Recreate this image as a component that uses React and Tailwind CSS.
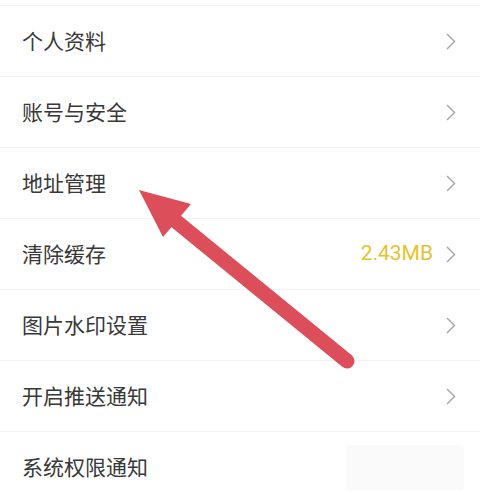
import React from "react";

const items = [
  { label: "个人资料" },
  { label: "账号与安全" },
  { label: "地址管理" },
  { label: "清除缓存", value: "2.43MB" },
  { label: "图片水印设置" },
  { label: "开启推送通知" },
  { label: "系统权限通知", hidden: true },
];

function Chevron() {
  return (
    <svg width="10" height="17" viewBox="0 0 10 17" fill="none">
      <path d="M1 1 L8.5 8.5 L1 16" stroke="#a3a3a3" strokeWidth="1.4" />
    </svg>
  );
}

export default function App() {
  return (
    <div
      className="relative w-[480px] h-[491px] overflow-hidden bg-white pt-[5px]"
      style={{ fontFamily: '"Noto Sans CJK SC", "Noto Sans", sans-serif' }}
    >
      {items.map((item) => (
        <div
          key={item.label}
          className="flex items-center h-[71px] border-t border-[#f2f2f2] pl-[22px] pr-[24px]"
        >
          <span className="flex-1 text-[21px] text-[#383838]">{item.label}</span>
          {item.value && (
            <span
              className="mr-[13px] text-[21px] text-[#e5c230]"
              style={{ fontFamily: 'Roboto, "Noto Sans", sans-serif' }}
            >
              {item.value}
            </span>
          )}
          {item.hidden ? (
            <div className="w-[118px] h-[45px] -mr-[8px] bg-[#fafafa] rounded-sm" />
          ) : (
            <Chevron />
          )}
        </div>
      ))}

      {/* red arrow drawn over the list */}
      <svg
        className="absolute left-0 top-0 pointer-events-none"
        width="480"
        height="491"
        viewBox="0 0 480 491"
      >
        <line
          x1="347"
          y1="361"
          x2="172"
          y2="218"
          stroke="#dc4e5a"
          strokeWidth="15"
          strokeLinecap="round"
        />
        <polygon points="139,190 191,204 163,237" fill="#dc4e5a" />
      </svg>
    </div>
  );
}
